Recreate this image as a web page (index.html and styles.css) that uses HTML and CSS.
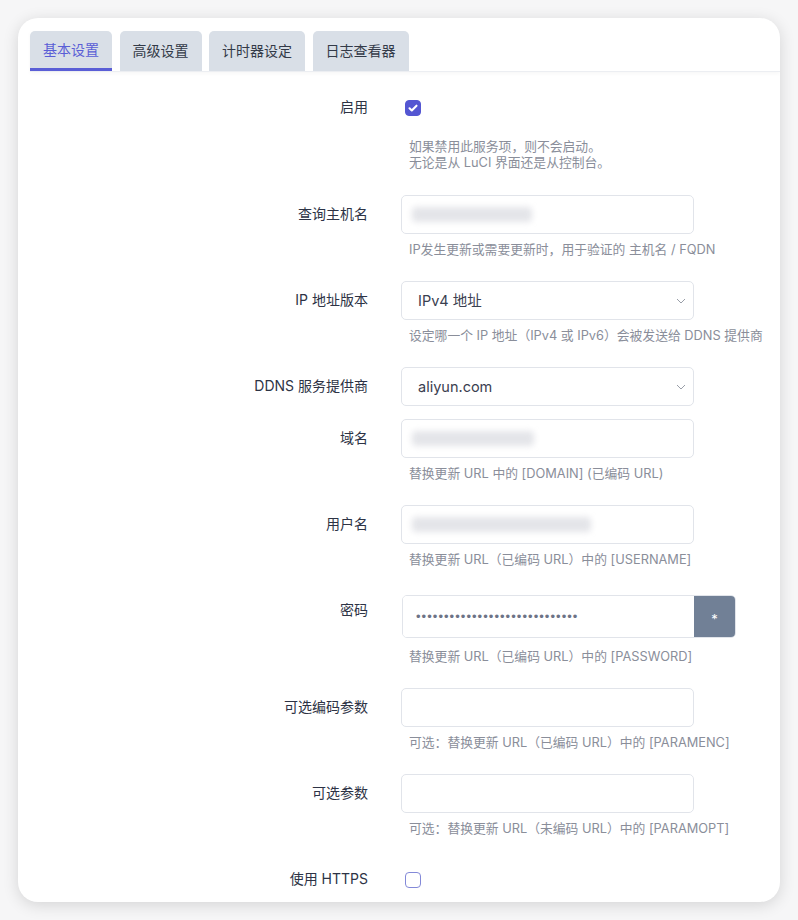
FILE: index.html
```html
<!DOCTYPE html>
<html lang="zh-CN">
<head>
    <meta charset="UTF-8">
    <meta name="viewport" content="width=device-width, initial-scale=1.0">
    <title>动态 DNS - 基本设置</title>
    <link rel="stylesheet" href="styles.css">
</head>
<body>
    <div class="card">
        <div class="tabs">
            <div class="tab active">基本设置</div>
            <div class="tab">高级设置</div>
            <div class="tab">计时器设定</div>
            <div class="tab">日志查看器</div>
        </div>

        <form class="settings">
            <div class="row">
                <label class="label">启用</label>
                <div class="field">
                    <div class="control"><input type="checkbox" class="check" checked></div>
                    <div class="desc desc-first">如果禁用此服务项，则不会启动。<br>无论是从 LuCI 界面还是从控制台。</div>
                </div>
            </div>

            <div class="row">
                <label class="label">查询主机名</label>
                <div class="field">
                    <div class="input"><span class="masked" style="width: 120px"></span></div>
                    <div class="desc">IP发生更新或需要更新时，用于验证的 主机名 / FQDN</div>
                </div>
            </div>

            <div class="row">
                <label class="label">IP 地址版本</label>
                <div class="field">
                    <select class="select">
                        <option>IPv4 地址</option>
                        <option>IPv6 地址</option>
                    </select>
                    <div class="desc">设定哪一个 IP 地址（IPv4 或 IPv6）会被发送给 DDNS 提供商</div>
                </div>
            </div>

            <div class="row">
                <label class="label">DDNS 服务提供商</label>
                <div class="field">
                    <select class="select">
                        <option>aliyun.com</option>
                    </select>
                </div>
            </div>

            <div class="row">
                <label class="label">域名</label>
                <div class="field">
                    <div class="input"><span class="masked" style="width: 122px"></span></div>
                    <div class="desc">替换更新 URL 中的 [DOMAIN] (已编码 URL)</div>
                </div>
            </div>

            <div class="row">
                <label class="label">用户名</label>
                <div class="field">
                    <div class="input"><span class="masked" style="width: 179px"></span></div>
                    <div class="desc">替换更新 URL（已编码 URL）中的 [USERNAME]</div>
                </div>
            </div>

            <div class="row">
                <label class="label">密码</label>
                <div class="field">
                    <div class="password-group">
                        <input type="password" class="password" value="xxxxxxxxxxxxxxxxxxxxxxxxxxxxx">
                        <button type="button" class="reveal">*</button>
                    </div>
                    <div class="desc desc-pass">替换更新 URL（已编码 URL）中的 [PASSWORD]</div>
                </div>
            </div>

            <div class="row">
                <label class="label">可选编码参数</label>
                <div class="field">
                    <input type="text" class="input">
                    <div class="desc">可选：替换更新 URL（已编码 URL）中的 [PARAMENC]</div>
                </div>
            </div>

            <div class="row">
                <label class="label">可选参数</label>
                <div class="field">
                    <input type="text" class="input">
                    <div class="desc">可选：替换更新 URL（未编码 URL）中的 [PARAMOPT]</div>
                </div>
            </div>

            <div class="row">
                <label class="label">使用 HTTPS</label>
                <div class="field">
                    <div class="control"><input type="checkbox" class="check"></div>
                </div>
            </div>
        </form>
    </div>
</body>
</html>
```

FILE: styles.css
```css
body {
    margin: 0;
    padding: 18px;
    background-color: #f6f6f7;
    font-family: 'Inter', 'Noto Sans CJK SC', sans-serif;
    color: #2d3345;
}
.card {
    background-color: white;
    border-radius: 20px;
    box-shadow: 0 3px 16px rgba(0,0,0,0.14);
    height: 884px;
    overflow: hidden;
    padding: 13px 0 0 12px;
    box-sizing: border-box;
}
.tabs {
    display: flex;
    gap: 7.5px;
    border-bottom: 1px solid #eceef2;
    box-shadow: 0 2px 4px rgba(0,0,0,0.03);
}
.tab {
    height: 40px;
    line-height: 40px;
    padding: 0 13px;
    font-size: 14px;
    color: #333a48;
    background-color: #d9dfe7;
    border-radius: 5px 5px 0 0;
    box-sizing: border-box;
}
.tab.active {
    color: #5a5ed6;
    border-bottom: 3px solid #5a5ed6;
    line-height: 38px;
}
.settings {
    padding-top: 16px;
    display: flex;
    flex-direction: column;
    gap: 13px;
}
.row {
    display: grid;
    grid-template-columns: 338px 1fr;
    column-gap: 33px;
}
.label {
    text-align: right;
    font-size: 14px;
    line-height: 20px;
    padding-top: 9px;
    color: #2d3345;
}
.field {
    display: flex;
    flex-direction: column;
    align-items: flex-start;
}
.control {
    height: 39px;
    display: flex;
    align-items: center;
    padding-left: 4px;
}
.check {
    appearance: none;
    margin: 0;
    width: 16px;
    height: 16px;
    border: 1.5px solid #8389d8;
    border-radius: 4px;
    background-color: white;
}
.check:checked {
    border-color: #5456d2;
    background-color: #5456d2;
    background-image: url("data:image/svg+xml,%3Csvg xmlns='http://www.w3.org/2000/svg' viewBox='0 0 16 16'%3E%3Cpath d='M4 8.3l2.6 2.5L12 5.4' fill='none' stroke='white' stroke-width='2.4' stroke-linecap='round' stroke-linejoin='round'/%3E%3C/svg%3E");
    background-size: 14px;
    background-position: center;
    background-repeat: no-repeat;
}
.input, .select, .password-group {
    width: 293px;
    height: 39px;
    box-sizing: border-box;
    border: 1px solid #e1e4ea;
    border-radius: 5px;
    background-color: white;
    font-family: inherit;
    font-size: 14.5px;
    color: #3a4050;
    margin: 0;
}
div.input {
    display: flex;
    align-items: center;
    padding-left: 10px;
}
.masked {
    display: block;
    height: 15px;
    background-color: #e4e5e9;
    border-radius: 4px;
    filter: blur(3px);
}
.select {
    appearance: none;
    padding: 0 30px 0 16px;
    background-image: url("data:image/svg+xml,%3Csvg xmlns='http://www.w3.org/2000/svg' viewBox='0 0 10 6'%3E%3Cpath d='M1 1l4 4 4-4' fill='none' stroke='%23999ea8' stroke-width='1'/%3E%3C/svg%3E");
    background-repeat: no-repeat;
    background-size: 10px 6px;
    background-position: right 7px center;
}
.password-group {
    width: 334px;
    height: 43px;
    margin-top: 4px;
    margin-left: 1px;
    display: flex;
    overflow: hidden;
}
.password {
    flex: 1;
    border: none;
    outline: none;
    padding: 0 0 0 13px;
    font-size: 13px;
    color: #6d7386;
    letter-spacing: 1.05px;
}
.reveal {
    width: 41px;
    border: none;
    background-color: #718096;
    color: white;
    font-size: 13px;
    font-family: inherit;
    padding: 4px 0 0;
}
.desc {
    font-size: 12.8px;
    line-height: 16px;
    color: #8a8e9a;
    padding-left: 8px;
    margin: 8px 0 10px;
}
.desc-first {
    margin: 12px 0 11px;
}
.desc-pass {
    margin-top: 11px;
}
```
